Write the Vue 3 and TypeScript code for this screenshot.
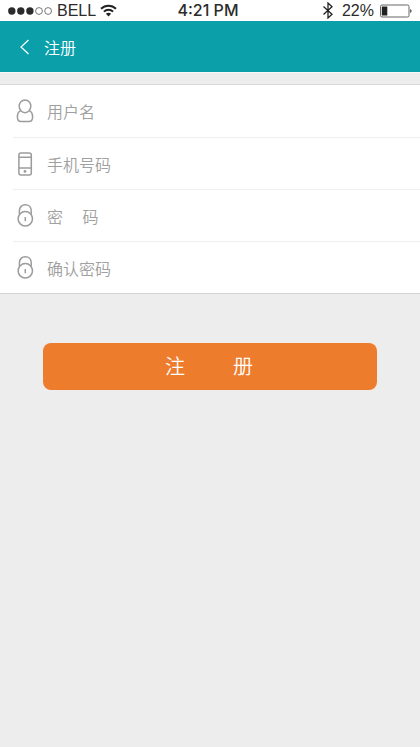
<script setup lang="ts">
import { reactive } from 'vue'

type FieldKey = 'username' | 'phone' | 'password' | 'confirm'

interface Field {
  key: FieldKey
  icon: 'user' | 'phone' | 'lock'
  type: string
  label: string
  placeholder: string
}

const fields: Field[] = [
  { key: 'username', icon: 'user', type: 'text', label: '用户名', placeholder: '用户名' },
  { key: 'phone', icon: 'phone', type: 'tel', label: '手机号码', placeholder: '手机号码' },
  { key: 'password', icon: 'lock', type: 'password', label: '密码', placeholder: '密\u3000 码' },
  { key: 'confirm', icon: 'lock', type: 'password', label: '确认密码', placeholder: '确认密码' },
]

const form = reactive<Record<FieldKey, string>>({ username: '', phone: '', password: '', confirm: '' })
</script>

<template>
  <div class="screen">
    <div class="status">
      <div class="status-side">
        <svg class="signal" width="46" height="10" viewBox="0 0 46 10" aria-hidden="true">
          <g fill="#2b2b2b">
            <circle cx="3.8" cy="5" r="3.7" />
            <circle cx="12.8" cy="5" r="3.7" />
            <circle cx="21.9" cy="5" r="3.7" />
          </g>
          <g fill="none" stroke="#555" stroke-width="0.8">
            <circle cx="31" cy="5" r="3.4" />
            <circle cx="40.1" cy="5" r="3.4" />
          </g>
        </svg>
        <span class="carrier">BELL</span>
        <svg width="17" height="13" viewBox="0 0 17 13" fill="none" stroke="#222" stroke-width="2" aria-hidden="true">
          <path d="M1 4.7C5.2.6 11.8.6 16 4.7" />
          <path d="M3.9 7.6c2.6-2.5 6.6-2.5 9.2 0" />
          <path d="M8.5 12.4 5.900 9.800c1.500-1.300 3.700-1.300 5.200 0z" fill="#222" stroke="none" />
        </svg>
      </div>
      <div class="time">4:21 PM</div>
      <div class="status-side right">
        <svg width="12" height="17" viewBox="0 0 12 17" fill="none" stroke="#222" stroke-width="1.300" aria-hidden="true">
          <path d="M1.500 4.500 10 12.300 6 16V1l4 3.700-8.500 7.800" />
        </svg>
        <span class="percent">22%</span>
        <svg width="33" height="14" viewBox="0 0 33 14" aria-hidden="true">
          <rect x="1.500" y="1" width="28.500" height="12" rx="1.500" fill="#fff" stroke="#555" stroke-width="0.900" />
          <rect x="2.800" y="2.500" width="5.500" height="9" fill="#222" />
          <path d="M31.300 5c1.600.5 1.600 3.500 0 4z" fill="#222" />
        </svg>
      </div>
    </div>

    <header class="bar">
      <button class="back" type="button" aria-label="返回">
        <svg width="10" height="16" viewBox="0 0 10 16" fill="none" stroke="#fff" stroke-width="1.200" aria-hidden="true">
          <path d="M8.500 1 1 8l7.500 7" />
        </svg>
      </button>
      <h1>注册</h1>
    </header>

    <form @submit.prevent>
      <div class="fields">
        <div v-for="f in fields" :key="f.key" class="row">
          <label :for="f.key" :aria-label="f.label">
            <svg width="18" height="24" viewBox="0 0 18 24" fill="none" stroke="#9c9c9c" stroke-width="1.500" aria-hidden="true">
              <template v-if="f.icon === 'user'">
                <ellipse cx="9" cy="7.300" rx="5.800" ry="6.400" />
                <path d="M4.800 11.600C2.500 12.600 1.400 15.200 1.400 18c0 3.200 1 4.500 3.600 4.500h8c2.600 0 3.600-1.300 3.600-4.500 0-2.800-1.100-5.400-3.400-6.400" />
              </template>
              <template v-else-if="f.icon === 'phone'">
                <rect x="2.900" y="1" width="12.400" height="22" rx="2" />
                <path d="M2.900 5.200h12.400M2.900 16h12.400" />
                <circle cx="9" cy="19.400" r="1.400" fill="#9c9c9c" stroke="none" />
              </template>
              <template v-else>
                <circle cx="9.300" cy="14.800" r="7.200" />
                <path d="M3.400 10.600V6.700C3.400 3.100 6 .8 9.300.8s5.900 2.300 5.900 5.900v3.900" />
                <path d="M9.300 13v4.200" />
              </template>
            </svg>
          </label>
          <input :id="f.key" v-model="form[f.key]" :type="f.type" :placeholder="f.placeholder" autocomplete="off" />
        </div>
      </div>

      <button class="submit" type="submit" aria-label="注册">
        <span>注</span>
        <span>册</span>
      </button>
    </form>
  </div>
</template>

<style>
body {
  background: #ededed;
}
</style>

<style scoped>
.screen {
  min-height: 100vh;
  background: #ededed;
  font-family: "Noto Sans CJK SC", sans-serif;
}

.status {
  display: grid;
  grid-template-columns: 1fr auto 1fr;
  align-items: center;
  height: 21px;
  padding: 0 8px;
  background: #fff;
  color: #2b2b2b;
  font: 16px/21px "Liberation Sans", sans-serif;
}

.status-side {
  display: flex;
  align-items: center;
}

.status-side.right {
  justify-content: flex-end;
}

.signal {
  margin-right: 3px;
}

.carrier {
  margin-right: 4px;
}

.percent {
  margin: 0 5px 0 8px;
}

.time {
  padding-right: 4px;
  font-family: Inter, "Liberation Sans", sans-serif;
  font-weight: 500;
}

.bar {
  display: flex;
  align-items: center;
  height: 51px;
  padding-left: 12px;
  background: #0b9faa;
  border-bottom: 1px solid #f8f8f8;
}

.back {
  display: flex;
  padding: 8px;
  border: 0;
  background: none;
}

h1 {
  margin: 0 0 0 6px;
  color: #fff;
  font-size: 16px;
  font-weight: 350;
  line-height: 24px;
}

.fields {
  margin-top: 11px;
  padding-left: 13px;
  background: #fff;
  border-top: 1px solid #d8d8d8;
  border-bottom: 1px solid #d4d4d4;
}

.row {
  display: flex;
  align-items: center;
  height: 52px;
  box-sizing: border-box;
  padding-left: 3px;
}

.row + .row {
  border-top: 1px solid #efefef;
}

label {
  display: flex;
}

input {
  flex: 1;
  min-width: 0;
  height: 40px;
  margin-left: 13px;
  padding: 0;
  border: 0;
  outline: 0;
  background: none;
  color: #666;
  font: 350 16px "Noto Sans CJK SC", sans-serif;
}

input::placeholder {
  color: #a0a0a0;
  opacity: 1;
}

.submit {
  display: flex;
  justify-content: center;
  align-items: center;
  gap: 48px;
  width: calc(100% - 86px);
  height: 47px;
  margin: 49px 43px 0;
  padding: 0 2px 2px 0;
  border: 0;
  border-radius: 8px;
  background: #ee7c2d;
  color: #fff;
  font: 350 20px "Noto Sans CJK SC", sans-serif;
}
</style>
